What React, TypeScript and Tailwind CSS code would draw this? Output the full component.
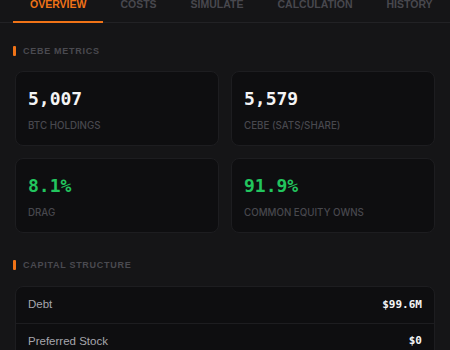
const tabs = ["Overview", "Costs", "Simulate", "Calculation", "History"]

const metrics = [
  { value: "5,007", label: "BTC Holdings", green: false },
  { value: "5,579", label: "CEBE (sats/share)", green: false },
  { value: "8.1%", label: "Drag", green: true },
  { value: "91.9%", label: "Common Equity Owns", green: true },
]

const capital = [
  { label: "Debt", value: "$99.6M" },
  { label: "Preferred Stock", value: "$0" },
]

function SectionTitle({ children }: { children: React.ReactNode }) {
  return (
    <div className="flex items-center gap-[7px] pl-[13px]">
      <span className="h-[10px] w-[3px] rounded-[1px] bg-[#f07317]" />
      <span className="text-[9px] font-bold uppercase leading-[14px] tracking-[0.08em] text-[#4a4a50]">
        {children}
      </span>
    </div>
  )
}

export default function App() {
  return (
    <div className="h-[350px] w-[450px] overflow-hidden bg-[#151517] font-['Liberation_Sans',Arial,sans-serif]">
      <div className="-mt-[4px] flex border-b border-[#222225] pl-[13px]">
        {tabs.map((t, i) => (
          <button
            key={t}
            type="button"
            className={
              i === 0
                ? "-mb-px shrink-0 border-b-2 border-[#f07317] px-[17px] pb-[9px] text-[10.5px] font-bold uppercase leading-4 text-[#f07317]"
                : "-mb-px shrink-0 border-b-2 border-transparent px-[17px] pb-[9px] text-[10.5px] font-bold uppercase leading-4 text-[#48484e]"
            }
          >
            {t}
          </button>
        ))}
      </div>

      <div className="pt-[21px]">
        <SectionTitle>CEBE Metrics</SectionTitle>
      </div>

      <div className="mt-[13px] grid grid-cols-2 gap-3 px-[15px]">
        {metrics.map((m) => (
          <div
            key={m.label}
            className="rounded-lg border border-[#1d1d20] bg-[#0e0e10] px-3 pb-3 pt-[15px]"
          >
            <div
              className={
                m.green
                  ? "font-['DejaVu_Sans_Mono',monospace] text-[18px] font-bold leading-6 text-[#22c55e]"
                  : "font-['DejaVu_Sans_Mono',monospace] text-[18px] font-bold leading-6 text-[#f4f4f5]"
              }
            >
              {m.value}
            </div>
            <div className="mt-2 font-['Inter',sans-serif] text-[9.75px] font-medium uppercase leading-[14px] text-[#48484e]">
              {m.label}
            </div>
          </div>
        ))}
      </div>

      <div className="pt-[25px]">
        <SectionTitle>Capital Structure</SectionTitle>
      </div>

      <div className="mx-[15px] mt-[14px] rounded-lg border border-[#1d1d20] bg-[#0e0e10]">
        {capital.map((c, i) => (
          <div
            key={c.label}
            className={
              i === 0
                ? "flex h-9 items-center justify-between px-3"
                : "flex h-9 items-center justify-between border-t border-[#1d1d20] px-3"
            }
          >
            <span className="text-[11.5px] text-[#a6a6ad]">{c.label}</span>
            <span className="font-['DejaVu_Sans_Mono',monospace] text-[11px] font-bold text-[#f4f4f5]">
              {c.value}
            </span>
          </div>
        ))}
      </div>
    </div>
  )
}
